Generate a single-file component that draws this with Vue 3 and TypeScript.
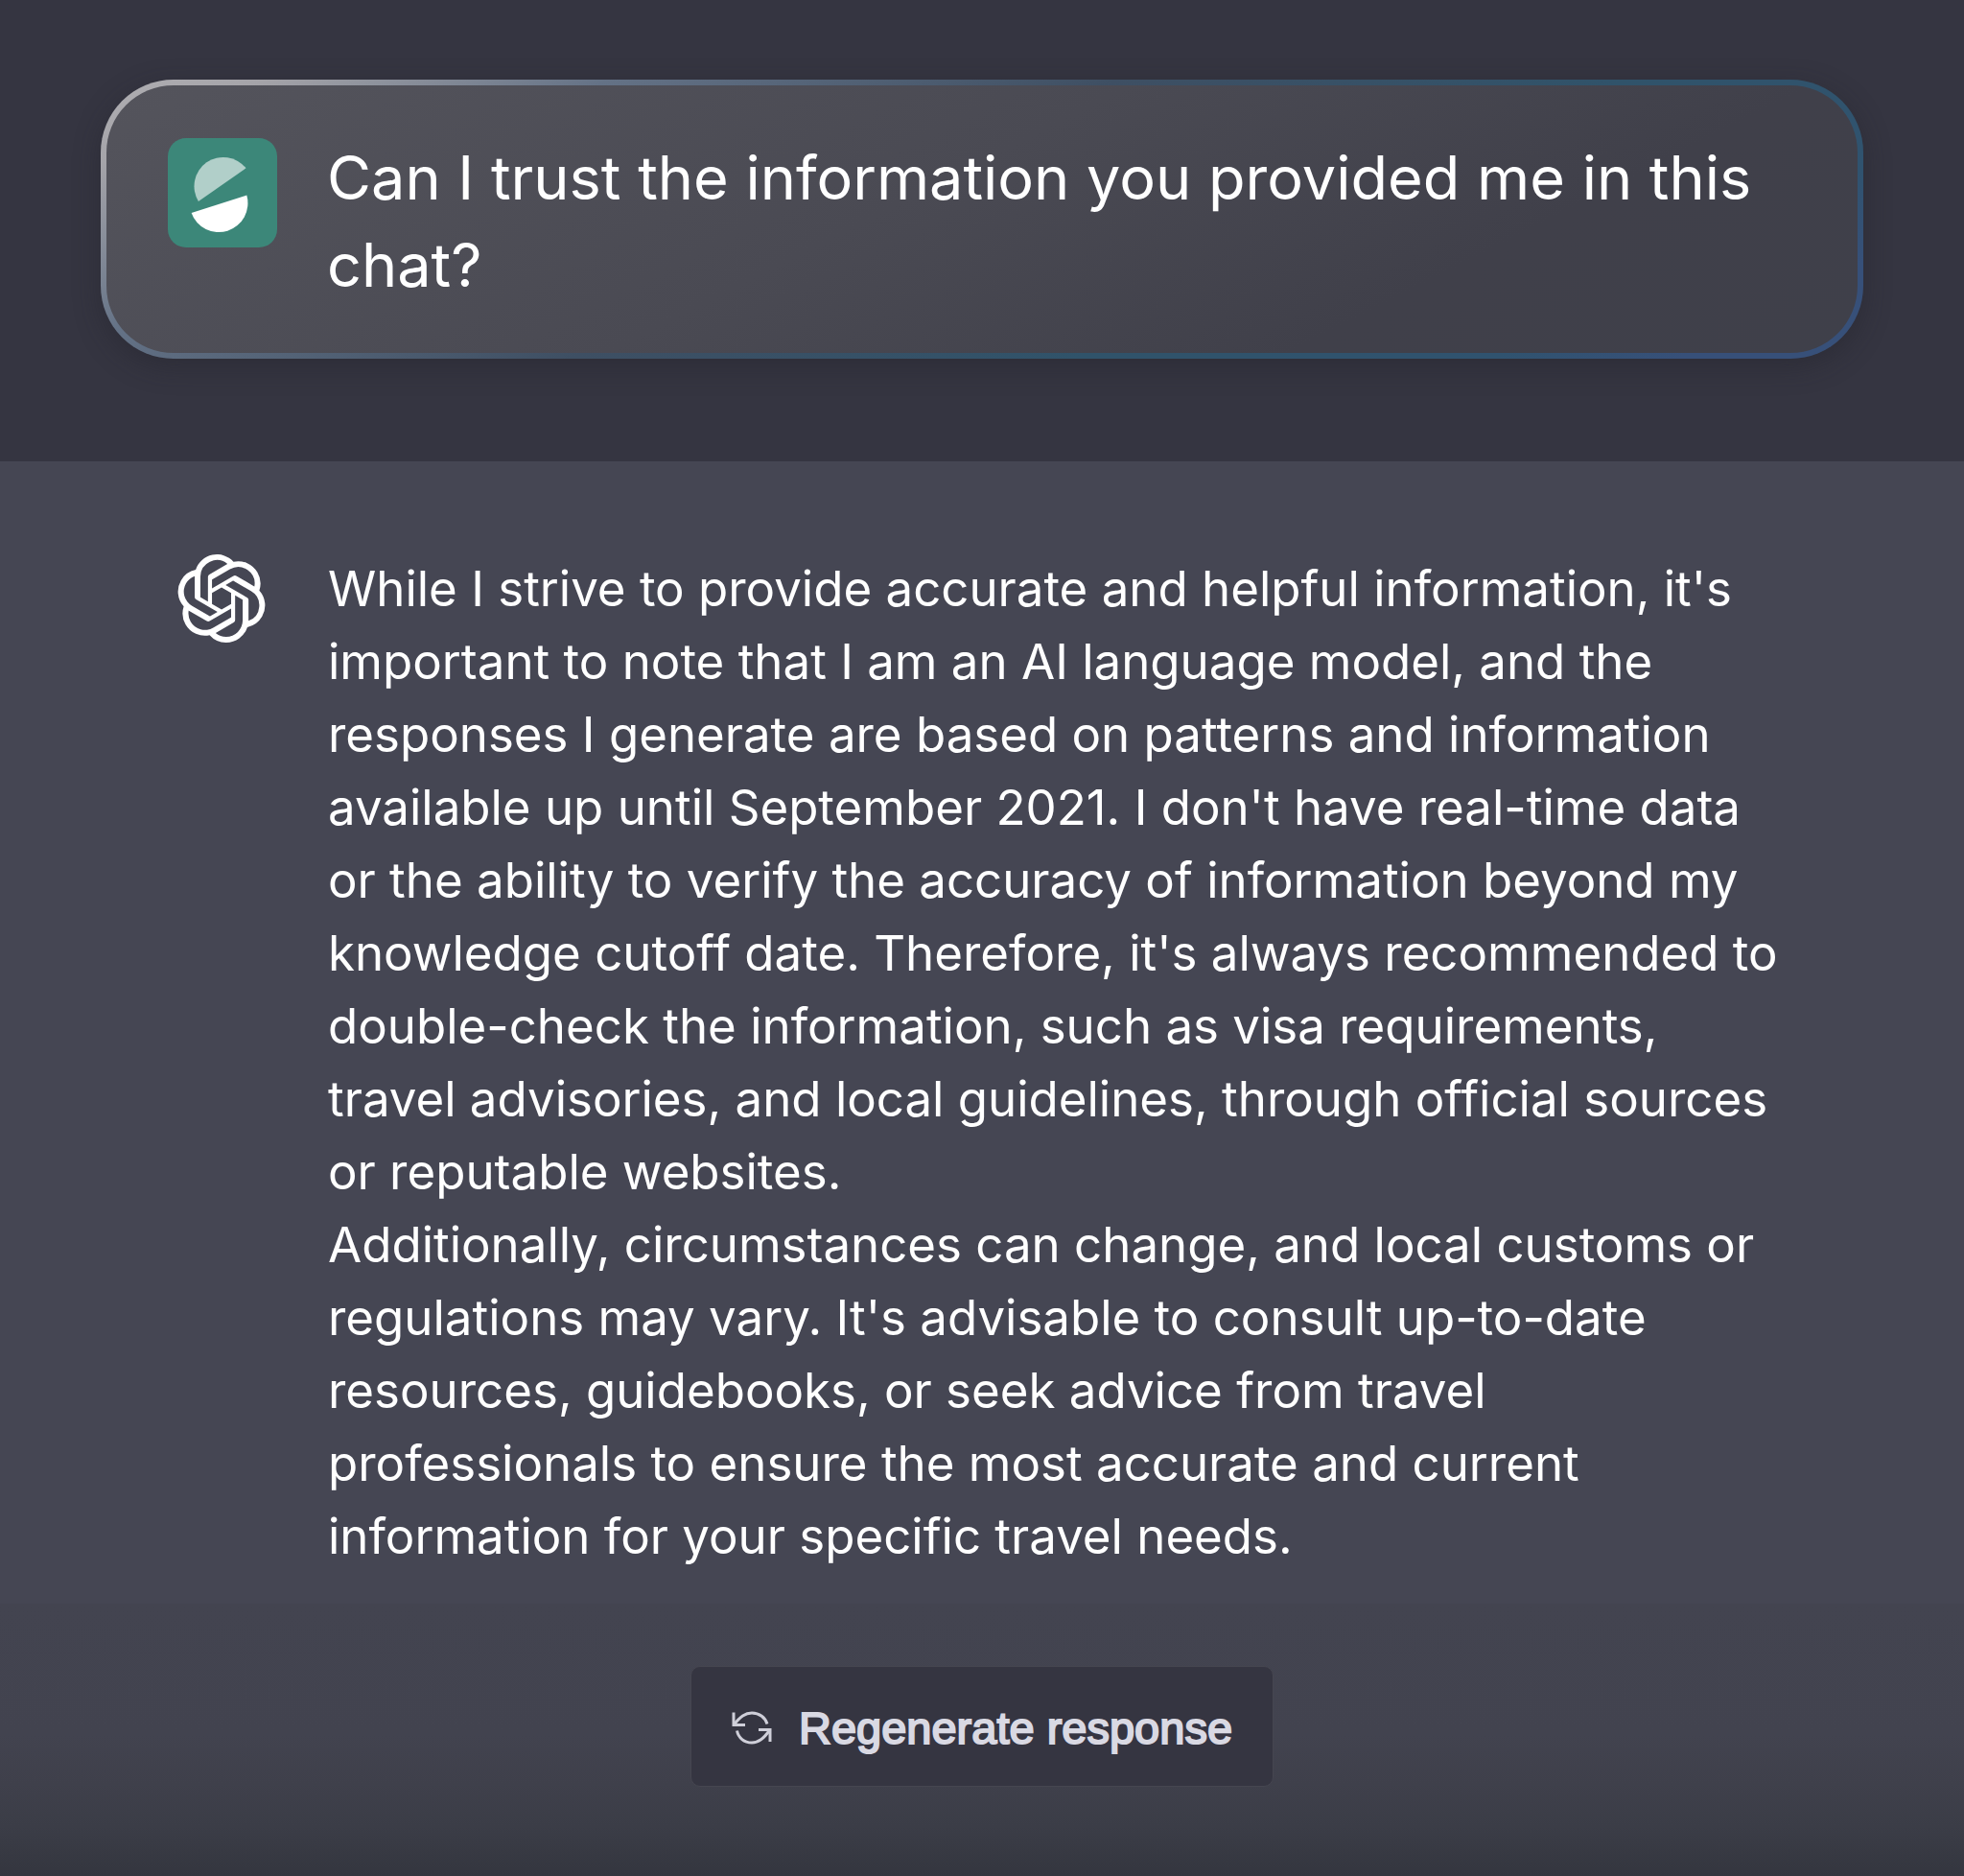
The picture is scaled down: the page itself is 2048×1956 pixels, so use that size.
<script setup lang="ts">
const question = 'Can I trust the information you provided me in this chat?'

const answer: string[] = [
  "While I strive to provide accurate and helpful information, it's important to note that I am an AI language model, and the responses I generate are based on patterns and information available up until September 2021. I don't have real-time data or the ability to verify the accuracy of information beyond my knowledge cutoff date. Therefore, it's always recommended to double-check the information, such as visa requirements, travel advisories, and local guidelines, through official sources or reputable websites.",
  "Additionally, circumstances can change, and local customs or regulations may vary. It's advisable to consult up-to-date resources, guidebooks, or seek advice from travel professionals to ensure the most accurate and current information for your specific travel needs.",
]
</script>

<template>
  <main class="chat">
    <section class="prompt">
      <article class="card">
        <svg class="avatar" viewBox="0 0 114 114" role="img" aria-label="User">
          <rect width="114" height="114" rx="19" fill="#3c8779" />
          <path d="M81.5 31.3A30.3 30.3 0 0 0 31.9 65.9Z" fill="#b1cfc9" />
          <path d="M82.3 59.6A30.3 30.3 0 0 1 24.6 78Z" fill="#fff" />
        </svg>
        <p class="question">{{ question }}</p>
      </article>
    </section>

    <section class="reply">
      <article class="message">
        <div class="bot">
          <svg class="logo" viewBox="0 0 24 24" role="img" aria-label="ChatGPT">
            <path
              fill="#fff"
              d="M22.2819 9.8211a5.9847 5.9847 0 0 0-.5157-4.9108 6.0462 6.0462 0 0 0-6.5098-2.9A6.0651 6.0651 0 0 0 4.9807 4.1818a5.9847 5.9847 0 0 0-3.9977 2.9 6.0462 6.0462 0 0 0 .7427 7.0966 5.98 5.98 0 0 0 .511 4.9107 6.051 6.051 0 0 0 6.5146 2.9001A5.9847 5.9847 0 0 0 13.2599 24a6.0557 6.0557 0 0 0 5.7718-4.2058 5.9894 5.9894 0 0 0 3.9977-2.9001 6.0557 6.0557 0 0 0-.7475-7.0729zm-9.022 12.6081a4.4755 4.4755 0 0 1-2.8764-1.0408l.1419-.0804 4.7783-2.7582a.7948.7948 0 0 0 .3927-.6813v-6.7369l2.02 1.1686a.071.071 0 0 1 .038.052v5.5826a4.504 4.504 0 0 1-4.4945 4.4944zm-9.6607-4.1254a4.4708 4.4708 0 0 1-.5346-3.0137l.142.0852 4.783 2.7582a.7712.7712 0 0 0 .7806 0l5.8428-3.3685v2.3324a.0804.0804 0 0 1-.0332.0615L9.74 19.9502a4.4992 4.4992 0 0 1-6.1408-1.6464zM2.3408 7.8956a4.485 4.485 0 0 1 2.3655-1.9728V11.6a.7664.7664 0 0 0 .3879.6765l5.8144 3.3543-2.0201 1.1685a.0757.0757 0 0 1-.071 0l-4.8303-2.7865A4.504 4.504 0 0 1 2.3408 7.872zm16.5963 3.8558L13.1038 8.364 15.1192 7.2a.0757.0757 0 0 1 .071 0l4.8303 2.7913a4.4944 4.4944 0 0 1-.6765 8.1042v-5.6772a.79.79 0 0 0-.407-.667zm2.0107-3.0231l-.142-.0852-4.7735-2.7818a.7759.7759 0 0 0-.7854 0L9.409 9.2297V6.8974a.0662.0662 0 0 1 .0284-.0615l4.8303-2.7866a4.4992 4.4992 0 0 1 6.6802 4.66zM8.3065 12.863l-2.02-1.1638a.0804.0804 0 0 1-.038-.0567V6.0742a4.4992 4.4992 0 0 1 7.3757-3.4537l-.142.0805L8.704 5.459a.7948.7948 0 0 0-.3927.6813zm1.0976-2.3654l2.602-1.4998 2.6069 1.4998v2.9994l-2.5974 1.4997-2.6067-1.4997Z"
            />
          </svg>
        </div>
        <div class="answer">
          <p v-for="(paragraph, i) in answer" :key="i">{{ paragraph }}</p>
        </div>
      </article>
    </section>

    <footer class="actions">
      <button type="button" class="regenerate">
        <svg class="refresh" viewBox="0 0 42 36" aria-hidden="true">
          <g fill="none" stroke="#cfcfd9" stroke-width="3">
            <path d="M2 1.500V14.500H14" />
            <path d="M2 14.500C9 6 14 2 21 2C29 2 35 7 37 13.500" />
            <path d="M40 32V19.500H28" />
            <path d="M40 19.500C33 29 28 33 21 33C13 33 7 28 5.500 20.500" />
          </g>
        </svg>
        Regenerate response
      </button>
    </footer>
  </main>
</template>

<style>
body {
  margin: 0;
  background: #34363f;
}
</style>

<style scoped>
.chat {
  display: flex;
  flex-direction: column;
  min-height: 100vh;
  background: #454653;
  color: #fff;
  font-family: Inter, "Liberation Sans", sans-serif;
  font-variant-ligatures: none;
}

p {
  margin: 0;
}

.prompt {
  padding: 83px 105px 107px;
  background: #353541;
}

.card {
  display: flex;
  gap: 52px;
  padding: 51px 64px 46px;
  border: 6px solid transparent;
  border-radius: 76px;
  background:
    linear-gradient(153deg, #54545c 0%, #4a4a53 45%, #40404a 75%, #3f404a 100%) padding-box,
    linear-gradient(153deg, #b0afb3 0%, #a5a4a9 7%, #647286 22%, #3e4f63 44%, #30536a 66%, #30536f 84%, #375079 92%) border-box;
  box-shadow: 0 8px 28px rgba(32, 32, 40, 0.4);
}

.avatar {
  flex: none;
  width: 114px;
  height: 114px;
  margin-top: 4px;
}

.question {
  flex: 1;
  font-size: 63px;
  line-height: 91px;
}

.reply {
  padding: 95px 180px 0 176px;
}

.message {
  display: flex;
  gap: 52px;
}

.bot {
  flex: none;
  width: 114px;
  padding: 2px 0 0 9px;
  box-sizing: border-box;
}

.logo {
  width: 92px;
  height: 92px;
}

.answer {
  flex: 1;
  font-size: 51px;
  line-height: 76px;
}

.actions {
  display: flex;
  flex: 1;
  justify-content: center;
  align-items: flex-start;
  margin-top: 32px;
  padding: 65px 0 93px;
  background: linear-gradient(#434450 0%, #42434f 48%, #3f404b 66%, #3b3d47 82%, #34363f 100%);
}

.regenerate {
  display: flex;
  align-items: center;
  gap: 28px;
  padding: 35px 42px 31px;
  border: 1px solid #464650;
  border-radius: 10px;
  background: #353541;
  color: #d9d9e3;
  font-family: "Liberation Sans", Arial, sans-serif;
  font-size: 47px;
  line-height: 58px;
  -webkit-text-stroke: 2px #d9d9e3;
}

.refresh {
  width: 42px;
  height: 36px;
}
</style>
